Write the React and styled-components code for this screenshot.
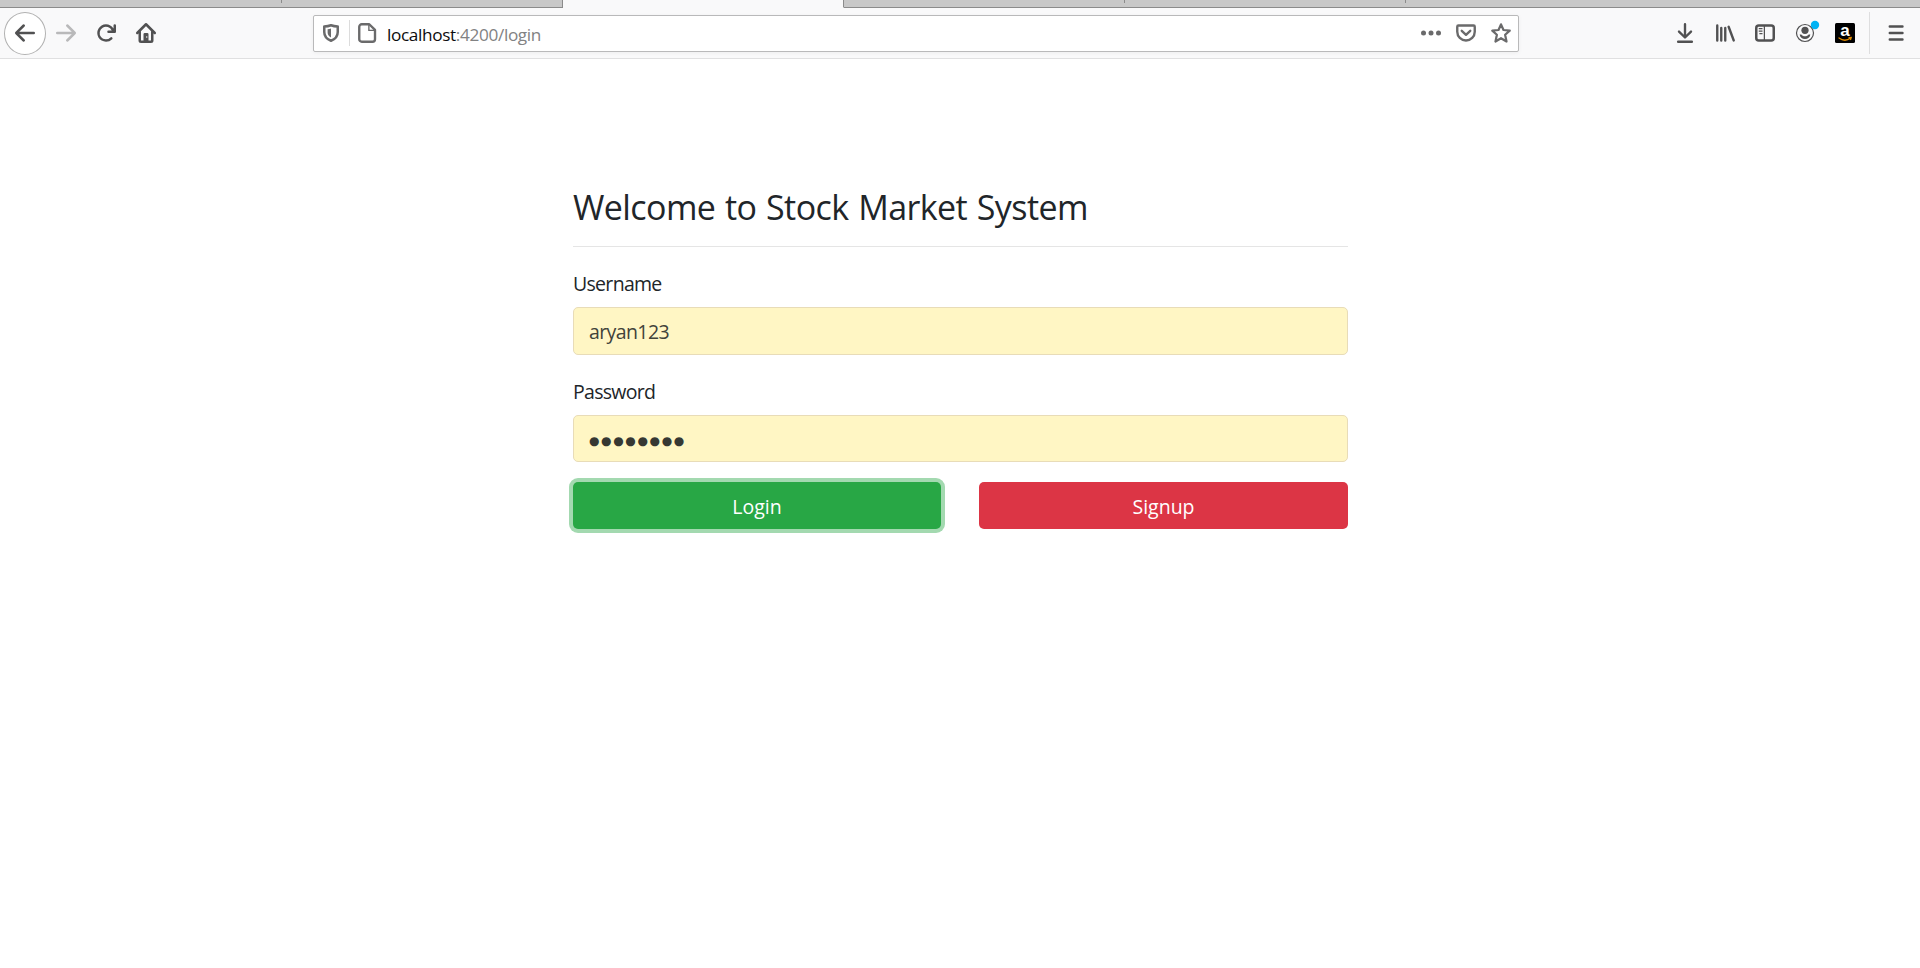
import React from 'react';
import styled, { createGlobalStyle, css } from 'styled-components';

const GlobalStyle = createGlobalStyle`
  *, *::before, *::after { box-sizing: border-box; }
  body {
    margin: 0;
    background: #fff;
    color: #212529;
    font-family: "Segoe UI", "Open Sans", "Noto Sans", sans-serif;
    font-size: 19.5px;
    line-height: 30px;
  }
`;

const Screen = styled.div`
  display: flex;
  flex-direction: column;
  height: 968px;
  overflow: hidden;
`;

const TabStrip = styled.div`
  display: flex;
  flex: none;
  height: 8px;
  padding-left: 1px;
  background: linear-gradient(#c8c8c8 7px, #8b8b8b 7px);
`;

const Tab = styled.div`
  display: flex;
  justify-content: flex-end;
  width: 281px;
  flex: ${(p) => (p.$last ? '1' : 'none')};
  border-bottom: 1px solid #8b8b8b;
  ${(p) => p.$edge && css`border-right: 1px solid #8b8b8b;`}
  ${(p) => p.$active && css`
    background: #f9f9fa;
    border-bottom-color: #f9f9fa;
    border-right: 1px solid #8b8b8b;
  `}
`;

const TabDivider = styled.span`
  width: 1px;
  height: 3px;
  background: #8b8b8b;
`;

const Toolbar = styled.header`
  display: flex;
  align-items: center;
  flex: none;
  height: 51px;
  padding: 0 14px 0 4px;
  background: #f9f9fa;
  border-bottom: 1px solid #e0e0e1;
`;

const BackButton = styled.button`
  display: flex;
  align-items: center;
  justify-content: center;
  width: 42px;
  height: 43px;
  padding: 0;
  border: 1px solid #b1b1b1;
  border-radius: 50%;
  background: #fff;
`;

const IconGroup = styled.div`
  display: flex;
  align-items: center;
  gap: 20px;
  margin-left: ${(p) => p.$left}px;
`;

const Icon = styled.svg`
  display: block;
  flex: none;
  width: 20px;
  height: 20px;
  color: ${(p) => p.$color || '#515152'};
  fill: currentColor;
  overflow: visible;
`;

const AddressBar = styled.div`
  display: flex;
  align-items: center;
  width: 1206px;
  height: 37px;
  margin-left: 157px;
  padding: 0 7px 0 7px;
  background: #fff;
  border: 1px solid #b9b9ba;
  border-radius: 2px;
  box-shadow: 0 1px 4px rgba(0, 0, 0, 0.05);
`;

const AddressDivider = styled.span`
  width: 1px;
  height: 26px;
  margin: 0 8px;
  background: #dcdcdc;
`;

const Address = styled.span`
  flex: 1;
  margin-left: 9px;
  padding-top: 3px;
  font-size: 17.2px;
  letter-spacing: -0.35px;
  color: #828283;
`;

const Host = styled.span`
  color: #0c0c0d;
`;

const PageActions = styled.div`
  display: flex;
  gap: 15px;
`;

const ToolbarDivider = styled.span`
  width: 1px;
  height: 42px;
  margin: 0 16px 0 14px;
  background: #dededf;
`;

const LoginForm = styled.main`
  display: flex;
  flex-direction: column;
  width: 775px;
  margin: 127px 0 0 573px;
`;

const Title = styled.h1`
  margin: 0;
  font-size: 34px;
  font-weight: 400;
  line-height: 42px;
  letter-spacing: -0.58px;
  word-spacing: 1.4px;
`;

const Rule = styled.hr`
  width: 100%;
  margin: 18px 0 22px;
  border: 0;
  border-top: 1px solid #e5e5e5;
`;

const Label = styled.label`
  height: 30px;
  margin-bottom: 8px;
  letter-spacing: -0.7px;
`;

const Field = styled.div`
  display: flex;
  align-items: center;
  height: ${(p) => p.$height}px;
  margin-bottom: ${(p) => p.$after}px;
  padding: 2px 15px 0;
  border: 1px solid #e8dcb8;
  border-radius: 5px;
  background: #fff6c4;
  color: #41423a;
  letter-spacing: -0.6px;
`;

const Mask = styled.span`
  padding-top: 2px;
  font-family: "DejaVu Sans", sans-serif;
  font-size: 12px;
  letter-spacing: 1.65px;
  color: #363833;
`;

const Actions = styled.div`
  display: grid;
  grid-template-columns: 368px 369px;
  gap: 38px;
`;

const Button = styled.button`
  height: 47px;
  padding: 2px 0 0;
  border: 0;
  border-radius: 5px;
  background: ${(p) => p.$color};
  color: #fff;
  font: inherit;
  ${(p) => p.$focused && css`box-shadow: 0 0 0 4px #a3d9b0;`}
`;

const tabs = [{}, { edge: true }, { active: true }, {}, {}, { last: true }];

export default function App() {
  return (
    <Screen>
      <GlobalStyle />
      <TabStrip>
        {tabs.map((t, i) => (
          <Tab key={i} $edge={t.edge} $active={t.active} $last={t.last}>
            {!t.edge && !t.active && !t.last && <TabDivider />}
          </Tab>
        ))}
      </TabStrip>
      <Toolbar>
        <BackButton aria-label="Back">
          <Icon viewBox="0 0 16 16">
            <path d="M15 7H3.414l4.293-4.293a1 1 0 0 0-1.414-1.414l-6 6a1 1 0 0 0 0 1.414l6 6a1 1 0 0 0 1.414-1.414L3.414 9H15a1 1 0 0 0 0-2z" />
          </Icon>
        </BackButton>
        <IconGroup $left={10}>
          <Icon viewBox="0 0 16 16" $color="#b9b9ba">
            <path transform="matrix(-1 0 0 1 16 0)" d="M15 7H3.414l4.293-4.293a1 1 0 0 0-1.414-1.414l-6 6a1 1 0 0 0 0 1.414l6 6a1 1 0 0 0 1.414-1.414L3.414 9H15a1 1 0 0 0 0-2z" />
          </Icon>
          <Icon viewBox="0 0 16 16">
            <path d="M15 1a1 1 0 0 0-1 1v2.418A6.995 6.995 0 1 0 8 15a6.954 6.954 0 0 0 4.95-2.05 1 1 0 0 0-1.414-1.414A5.019 5.019 0 1 1 12.549 6H10a1 1 0 0 0 0 2h5a1 1 0 0 0 1-1V2a1 1 0 0 0-1-1z" />
          </Icon>
          <Icon viewBox="0 0 16 16">
            <g fill="none" stroke="currentColor" strokeWidth="2" strokeLinecap="round" strokeLinejoin="round">
              <path d="M1 8l7-7 7 7" />
              <path d="M3 7v7a1 1 0 0 0 1 1h8a1 1 0 0 0 1-1V7" />
            </g>
            <path fillRule="evenodd" d="M7 8h2a1 1 0 0 1 1 1v6H6V9a1 1 0 0 1 1-1zm1.2 2.6v1.2h.8v-1.2z" />
          </Icon>
        </IconGroup>
        <AddressBar>
          <Icon viewBox="0 0 16 16" $color="#6a6a6b">
            <path fill="none" stroke="currentColor" strokeWidth="2" strokeLinejoin="round" d="M8 1.8C6.3 2.4 4.5 2.7 2.6 2.8v4.4c0 3.3 1.8 5.6 5.4 7 3.6-1.4 5.4-3.7 5.4-7V2.8C11.5 2.7 9.7 2.4 8 1.8z" />
            <path d="M8 4.3C7.2 4.6 6.3 4.8 5.3 4.9v2.6c0 1.7.8 3 2.7 4z" />
          </Icon>
          <AddressDivider />
          <Icon viewBox="0 0 16 16" $color="#6a6a6b">
            <path fill="none" stroke="currentColor" strokeWidth="1.9" strokeLinejoin="round" d="M3 1h6L13.6 5.500V13a2 2 0 0 1-2 2H3a2 2 0 0 1-2-2V3a2 2 0 0 1 2-2z" />
            <path fill="none" stroke="currentColor" strokeWidth="1.1" d="M8.700 1.500v4.400h4.600" />
          </Icon>
          <Address><Host>localhost</Host>:4200/login</Address>
          <PageActions>
            <Icon viewBox="0 0 16 16" $color="#6a6a6b">
              <circle cx="2" cy="8" r="2" /><circle cx="8" cy="8" r="2" /><circle cx="14" cy="8" r="2" />
            </Icon>
            <Icon viewBox="0 0 16 16" $color="#6a6a6b">
              <g fill="none" stroke="currentColor" strokeWidth="1.9" strokeLinecap="round" strokeLinejoin="round">
                <path d="M1.9 2h12.2a.9.9 0 0 1 .9.9V7A7 7 0 0 1 1 7V2.900a.9.9 0 0 1 .9-.9z" />
                <path d="M4.600 6.300L8 9.500l3.400-3.200" />
              </g>
            </Icon>
            <Icon viewBox="0 0 16 16" $color="#6a6a6b">
              <path fill="none" stroke="currentColor" strokeWidth="1.8" strokeLinejoin="round" d="M8 1.100l2 4.500 5 .5-3.700 3.300 1.100 5.400L8 12.200l-4.400 2.600 1.100-5.400L1 6.100l5-.5z" />
            </Icon>
          </PageActions>
        </AddressBar>
        <IconGroup $left={156}>
          <Icon viewBox="0 0 16 16">
            <g fill="none" stroke="currentColor" strokeWidth="1.9" strokeLinecap="round" strokeLinejoin="round">
              <path d="M8 1v10.300M3.200 6.900L8 11.600l4.800-4.700M2.500 15h11" />
            </g>
          </Icon>
          <Icon viewBox="0 0 16 16">
            <g fill="none" stroke="currentColor" strokeWidth="1.9" strokeLinecap="round">
              <path d="M1.800 2v12M5 4v10M8.200 4v10M10.900 3l4.100 11" />
            </g>
          </Icon>
          <Icon viewBox="0 0 16 16">
            <rect x="1" y="2" width="14" height="12" rx="2" fill="none" stroke="currentColor" strokeWidth="2" />
            <path fill="none" stroke="currentColor" strokeWidth="1" d="M7.500 2v12M3 4.500h3M3 6.500h3M3.500 8.500h2.500" />
          </Icon>
          <Icon viewBox="0 0 20 20">
            <circle cx="10" cy="10" r="8.5" fill="none" stroke="currentColor" strokeWidth="1.2" />
            <circle cx="10" cy="7.3" r="3.6" />
            <path d="M4.700 11.500h1.600c.8 1.200 2.100 1.800 3.700 1.800s2.900-.6 3.700-1.800h1.600c-.3 2.800-2.400 4.600-5.300 4.600s-5-1.800-5.300-4.600z" />
            <circle cx="20" cy="2" r="4.2" fill="#00b3f4" />
          </Icon>
          <Icon viewBox="0 0 20 20">
            <rect width="20" height="20" rx="1.5" fill="#000" />
            <text x="10" y="13.3" textAnchor="middle" fontFamily="Liberation Sans, sans-serif" fontWeight="700" fontSize="17" fill="#fff">a</text>
            <path fill="none" stroke="#e08a00" strokeWidth="1.3" strokeLinecap="round" d="M4 15c3.500 2.700 8 2.700 11.500.3M14 14.600l2.200-.1-.6 2" />
          </Icon>
        </IconGroup>
        <ToolbarDivider />
        <Icon viewBox="0 0 16 16">
          <path fill="none" stroke="currentColor" strokeWidth="1.9" strokeLinecap="round" d="M3 2.800h10.200M3 8h10.200M3 13.200h10.200" />
        </Icon>
      </Toolbar>
      <LoginForm>
        <Title>Welcome to Stock Market System</Title>
        <Rule />
        <Label>Username</Label>
        <Field $height={48} $after={22}>aryan123</Field>
        <Label>Password</Label>
        <Field $height={47} $after={20}><Mask>●●●●●●●●</Mask></Field>
        <Actions>
          <Button $color="#28a745" $focused>Login</Button>
          <Button $color="#dc3545">Signup</Button>
        </Actions>
      </LoginForm>
    </Screen>
  );
}
